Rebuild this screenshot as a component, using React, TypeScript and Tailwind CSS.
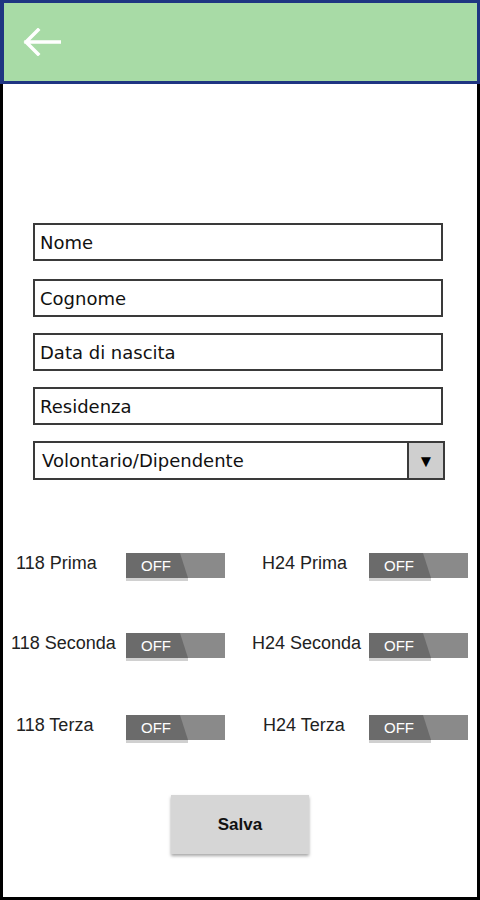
import React from "react";

function Toggle() {
  return (
    <div className="relative w-[99px] h-[28px]">
      <div className="absolute left-0 top-0 w-[99px] h-[25px] bg-[#8a8a8a]" />
      <svg className="absolute left-0 top-0" width="62" height="25" viewBox="0 0 62 25">
        <polygon points="0,0 54,0 62,25 0,25" fill="#6b6b6b" />
      </svg>
      <div className="absolute left-0 top-[25px] w-[62px] h-[3px] bg-[#d0d0d0]" />
      <span
        className="absolute left-[15px] top-[4px] text-white text-[15px] leading-[18px]"
        style={{ fontFamily: "'Liberation Sans', Arial, sans-serif" }}
      >
        OFF
      </span>
    </div>
  );
}

function Field({ label, mt }: { label: string; mt: string }) {
  return (
    <div className={`${mt} w-[410px] h-[38px] border-2 border-[#3a3a3a] flex items-center pl-[5px]`}>
      <span className="text-[18px] text-[#111]" style={{ fontFamily: "'Comic Sans MS', 'DejaVu Sans', sans-serif" }}>
        {label}
      </span>
    </div>
  );
}

export default function App() {
  const labelFont = { fontFamily: "'Liberation Sans', Arial, sans-serif" };
  const rows = [
    { l: "118 Prima", lp: "pl-[13px]", r: "H24 Prima", rp: "pl-[37px]", mt: "mt-[73px]" },
    { l: "118 Seconda", lp: "pl-[8px]", r: "H24 Seconda", rp: "pl-[27px]", mt: "mt-[52px]" },
    { l: "118 Terza", lp: "pl-[13px]", r: "H24 Terza", rp: "pl-[38px]", mt: "mt-[54px]" },
  ];
  return (
    <div className="w-[480px] h-[900px] flex flex-col bg-white">
      <div className="h-[84px] bg-[#a8dba6] border-[3px] border-[#1f3582] border-l-[4px] flex items-center pl-[19px] shrink-0">
        <svg width="38" height="28" viewBox="0 0 38 28">
          <path d="M37 14 H3 M15 2 L3 14 L15 26" stroke="white" strokeWidth="3.5" fill="none" strokeLinecap="square" />
        </svg>
      </div>
      <div className="flex-1 border-x-[3px] border-b-[3px] border-black flex flex-col">
        <div className="pl-[30px] pt-[139px] flex flex-col">
          <Field label="Nome" mt="mt-0" />
          <Field label="Cognome" mt="mt-[18px]" />
          <Field label="Data di nascita" mt="mt-[16px]" />
          <Field label="Residenza" mt="mt-[16px]" />
          <div className="mt-[16px] w-[412px] h-[39px] border-2 border-[#3a3a3a] flex items-stretch">
            <div className="flex-1 flex items-center pl-[7px]">
              <span className="text-[18px] text-[#111]" style={{ fontFamily: "'Comic Sans MS', 'DejaVu Sans', sans-serif" }}>
                Volontario/Dipendente
              </span>
            </div>
            <div className="w-[36px] bg-[#cfcfcf] border-l-2 border-[#3a3a3a] flex items-center justify-center text-[17px] text-black">
              ▼
            </div>
          </div>
        </div>
        {rows.map((r, i) => (
          <div key={i} className={`${r.mt} flex`}>
            <div className="w-[123px] flex items-start">
              <span className={`${r.lp} text-[18px] text-[#222] leading-[20px] whitespace-nowrap`} style={labelFont}>{r.l}</span>
            </div>
            <Toggle />
            <div className="w-[144px] flex items-start">
              <span className={`${r.rp} text-[18px] text-[#222] leading-[20px] whitespace-nowrap`} style={labelFont}>{r.r}</span>
            </div>
            <Toggle />
          </div>
        ))}
        <div className="mt-[52px] flex">
          <button
            className="ml-[168px] w-[138px] h-[59px] bg-[#d6d6d6] shadow-[0_2px_3px_rgba(0,0,0,0.35)] text-[17px] font-bold text-[#111]"
            style={labelFont}
          >
            Salva
          </button>
        </div>
      </div>
    </div>
  );
}
